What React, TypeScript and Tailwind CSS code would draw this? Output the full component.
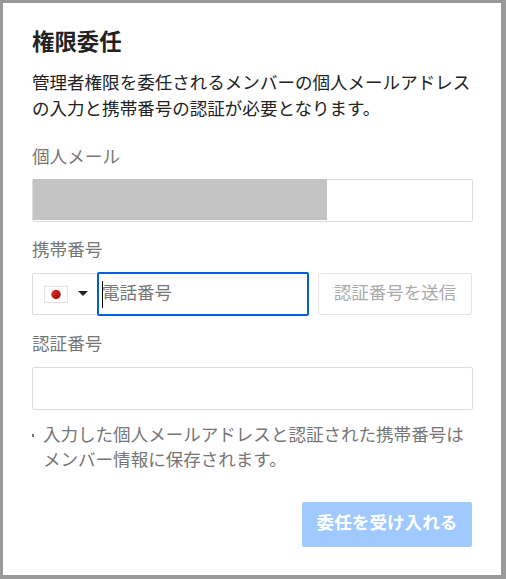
const labelClass = "block h-[26px] text-[17.6px] leading-[26px]";

function FlagJapan() {
  return (
    <svg width="24" height="17" viewBox="0 0 24 17" aria-hidden="true">
      <defs>
        <linearGradient id="flag-sun" x1="0" y1="0" x2="1" y2="1">
          <stop offset="0" stopColor="#d83a32" />
          <stop offset="1" stopColor="#a80000" />
        </linearGradient>
      </defs>
      <rect x="0.5" y="0.5" width="23" height="16" fill="#fff" stroke="#e3e3e3" />
      <circle cx="12" cy="8.5" r="4.7" fill="url(#flag-sun)" />
    </svg>
  );
}

export default function App() {
  return (
    <main className="h-[579px] w-[506px] border-t-[3px] border-r-[5px] border-b-4 border-l-[3px] border-[#999] bg-white pl-[29px] pr-[28px] pt-[21px] font-['Noto_Sans_CJK_JP',sans-serif] text-[#767676]">
      <h1 className="h-[45px] text-[22.4px] font-bold leading-8 text-[#222]">権限委任</h1>
      <p className="h-[74px] whitespace-nowrap text-[17.55px] leading-[26px] text-[#222]">
        管理者権限を委任されるメンバーの個人メールアドレス
        <br />
        の入力と携帯番号の認証が必要となります。
      </p>

      <span className={labelClass}>個人メール</span>
      {/* masked address */}
      <div className="mt-[10px] h-[43px] w-[441px] rounded-[2px] border border-[#dcdcdc]">
        <div className="-mt-px h-[41px] w-[294px] bg-[#c3c3c3]" />
      </div>

      <span className={`${labelClass} mt-[14px]`}>携帯番号</span>
      <div className="mt-[10px] flex h-11 items-center">
        <button
          type="button"
          className="flex h-[42px] w-[65px] items-center rounded-l-[2px] border border-r-0 border-[#dcdcdc] pl-[11px]"
        >
          <FlagJapan />
          <svg className="ml-[10px] mb-[1px]" width="10" height="5" viewBox="0 0 10 5" aria-hidden="true">
            <path d="M0 0h10L5 5z" fill="#222" />
          </svg>
        </button>
        <div className="flex h-11 w-[212px] items-center rounded-[2px] border-2 border-[#0060e0] pl-[3px]">
          <span className="h-[27px] w-px bg-black" />
          <span className="-ml-px pb-[4px] text-[17.5px] leading-[26px]">電話番号</span>
        </div>
        <button
          type="button"
          className="ml-[9px] h-[42px] w-[154px] whitespace-nowrap rounded-[2px] border border-[#e5e5e5] pb-[4px] text-[17.55px] leading-[26px] text-[#aaa]"
        >
          認証番号を送信
        </button>
      </div>

      <span className={`${labelClass} mt-[14px]`}>認証番号</span>
      <div className="mt-[11px] h-[43px] w-[441px] rounded-[2px] border border-[#dcdcdc]" />

      <div className="mt-[11px] flex whitespace-nowrap text-[17.55px] leading-[25px]">
        <span className="mt-[13px] mr-[9px] h-[3px] w-[2px] bg-[#767676]" />
        <p>
          入力した個人メールアドレスと認証された携帯番号は
          <br />
          メンバー情報に保存されます。
        </p>
      </div>

      <div className="mt-[31px] flex justify-end pr-[1px]">
        <button
          type="button"
          className="h-[45px] w-[170px] whitespace-nowrap rounded-[2px] bg-[#a0caff] pb-[5px] text-[17.6px] font-bold leading-[26px] text-white"
        >
          委任を受け入れる
        </button>
      </div>
    </main>
  );
}
